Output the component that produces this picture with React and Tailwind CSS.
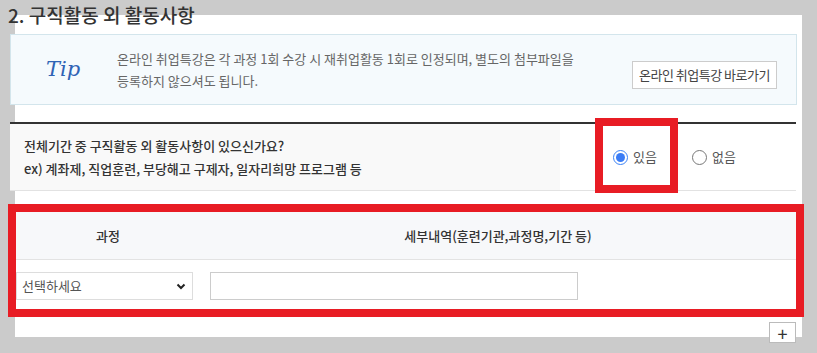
import React from 'react';

const font = { fontFamily: '"Noto Sans CJK KR", "Noto Sans", sans-serif' };

const Radio = ({ checked, label }) => (
  <label className="flex items-center gap-[5px] text-[13px] text-[#555]">
    {checked ? (
      <span className="w-[15px] h-[15px] rounded-full border-[1.5px] border-[#3b82f6] flex items-center justify-center">
        <span className="w-[9px] h-[9px] rounded-full bg-[#3b7cf5]" />
      </span>
    ) : (
      <span className="w-[15px] h-[15px] rounded-full border border-[#777] bg-white" />
    )}
    {label}
  </label>
);

export default function App() {
  return (
    <div className="w-[817px] h-[353px] bg-[#cbcbcb] overflow-hidden pt-[15px] pl-[15px]" style={font}>
      <div className="w-[787px] h-[322px] bg-white relative flex flex-col">
        <h2 className="shrink-0 -mt-[15px] -ml-[7px] h-[30px] leading-[30px] text-[19px] text-[#333] font-medium">
          2. 구직활동 외 활동사항
        </h2>

        {/* Tip */}
        <div className="shrink-0 mt-[4px] -ml-[5px] w-[787px] h-[71px] border border-[#d3e5ec] bg-[#f5fafd] flex items-center">
          <span className="ml-[35px] w-[67px] text-[21px] italic font-light text-[#2f63b5]" style={{ fontFamily: '"DejaVu Serif", serif' }}>
            Tip
          </span>
          <p className="ml-[4px] text-[13px] leading-[22px] text-[#666] w-[500px]">
            온라인 취업특강은 각 과정 1회 수강 시 재취업활동 1회로 인정되며, 별도의 첨부파일을
            <br />
            등록하지 않으셔도 됩니다.
          </p>
          <button className="ml-auto mr-[19px] mt-[10px] w-[145px] h-[28px] border border-[#ccc] bg-white text-[13px] text-[#444] tracking-[-0.5px]">
            온라인 취업특강 바로가기
          </button>
        </div>

        {/* Question row */}
        <div className="shrink-0 mt-[17px] -ml-[5px] w-[786px] h-[69px] border-t-2 border-[#333] border-b border-b-[#e2e2e2] flex">
          <div className="w-[550px] bg-[#f9f9f9] pl-[14px] flex flex-col justify-center text-[13px] leading-[23px] text-[#333] font-medium">
            <span>전체기간 중 구직활동 외 활동사항이 있으신가요?</span>
            <span>ex) 계좌제, 직업훈련, 부당해고 구제자, 일자리희망 프로그램 등</span>
          </div>
          <div className="flex-1 flex items-center pl-[53px] gap-[35px]">
            <Radio checked label="있음" />
            <Radio label="없음" />
          </div>
        </div>

        {/* annotation box over radio */}
        <div className="absolute left-[580px] top-[103px] w-[83px] h-[75px] border-8 border-[#e81c24] pointer-events-none" />

        {/* Table */}
        <div className="shrink-0 mt-[13px] -ml-[7px] w-[796px] h-[113px] border-8 border-[#e81c24] flex flex-col">
          <div className="h-[48px] bg-[#f7f8fa] border-b border-[#e3e3e3] flex items-center text-[13px] text-[#333] font-medium">
            <div className="w-[184px] text-center">과정</div>
            <div className="flex-1 text-center">세부내역(훈련기관,과정명,기간 등)</div>
          </div>
          <div className="flex-1 bg-white flex items-center pt-[3px]">
            <div className="w-[177px] h-[28px] border border-[#ddd] flex items-center justify-between px-[5px] text-[13px] text-[#555]">
              <span>선택하세요</span>
              <svg width="10" height="7" viewBox="0 0 10 7" className="mr-[1px]">
                <path d="M1.5 1.5 L5 5 L8.5 1.5" fill="none" stroke="#222" strokeWidth="2" />
              </svg>
            </div>
            <div className="ml-[17px] w-[368px] h-[28px] border border-[#ccc] bg-white" />
          </div>
        </div>

        <button className="shrink-0 mt-[5px] self-end mr-[6px] w-[27px] h-[21px] border border-[#bbb] bg-white flex items-center justify-center text-[18px] leading-none text-[#333]">
          +
        </button>
      </div>
    </div>
  );
}
